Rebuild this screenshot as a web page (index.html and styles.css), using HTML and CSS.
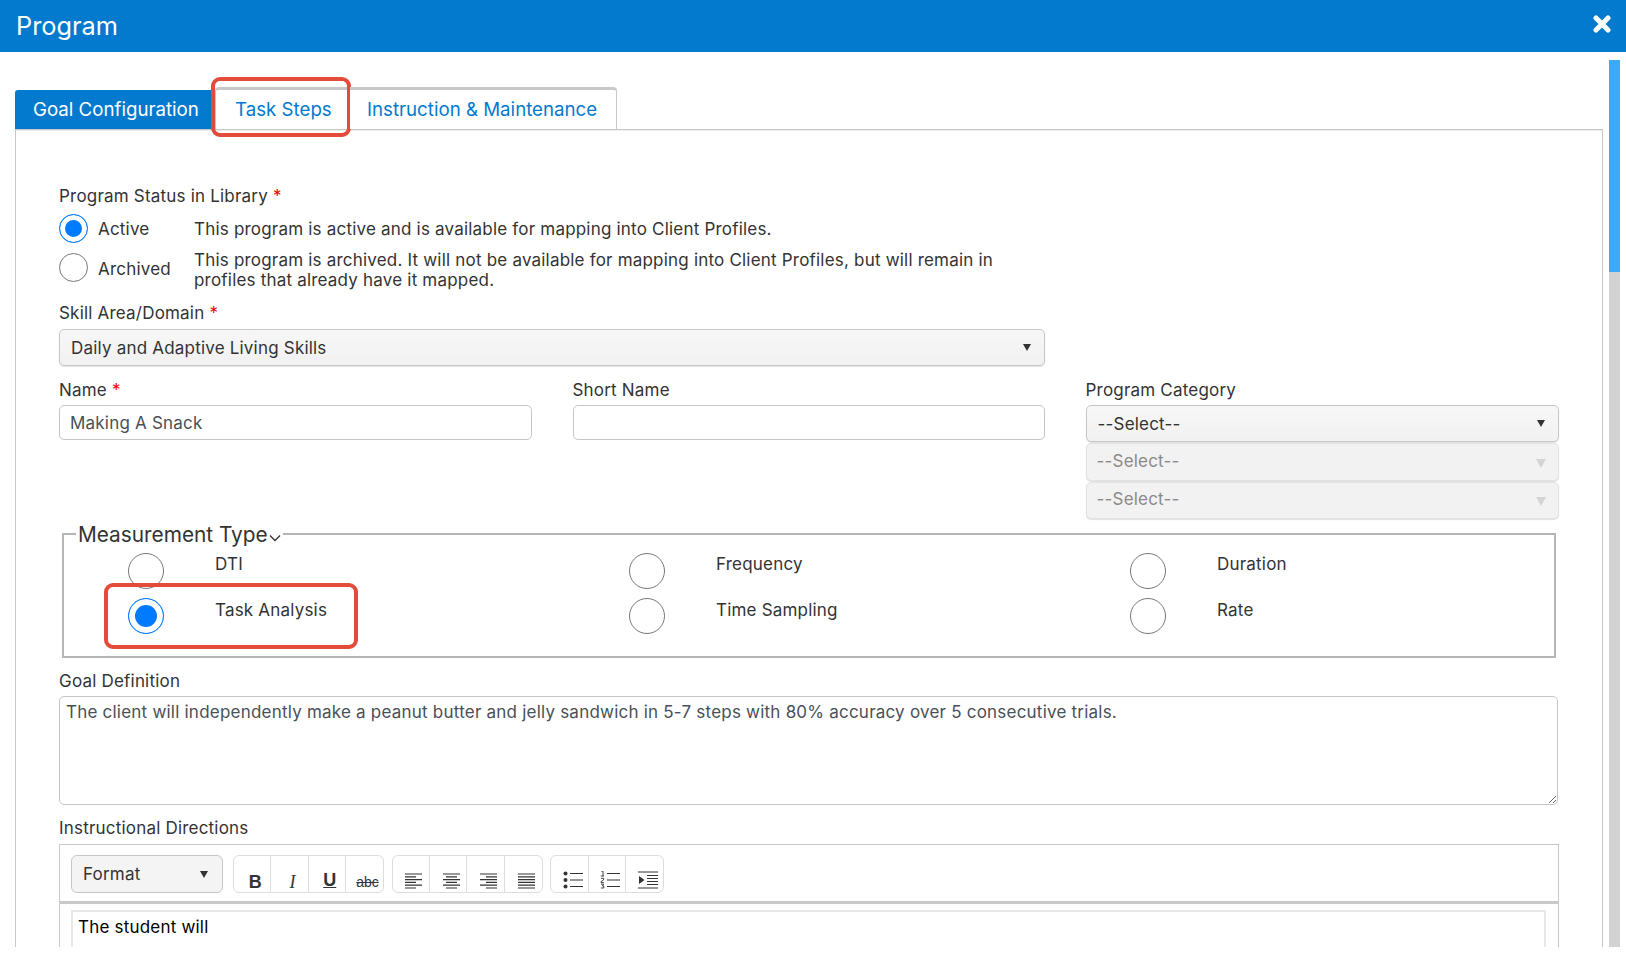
FILE: index.html
```html
<!DOCTYPE html>
<html lang="en">
<head>
<meta charset="utf-8">
<title>Program</title>
<link rel="stylesheet" href="styles.css">
</head>
<body>
<div class="modal">
  <header class="modal-header">
    <h1 class="modal-title">Program</h1>
    <svg class="close-icon" viewBox="0 0 18 18" width="18" height="18" aria-label="Close"><path d="M3 3 L15 15 M15 3 L3 15" fill="none" stroke="#fff" stroke-width="5" stroke-linecap="round"/></svg>
  </header>
  <div class="modal-body">
    <div class="scrollbar"><div class="scrollbar-thumb"></div></div>
    <nav class="tabs">
      <a class="tab tab-active">Goal Configuration</a>
      <a class="tab tab-steps">Task Steps<span class="callout callout-tab"></span></a>
      <a class="tab tab-inst">Instruction &amp; Maintenance</a>
    </nav>
    <section class="panel">
      <div class="field-label">Program Status in Library <span class="req">*</span></div>
      <div class="status-row">
        <input class="radio radio-sm" type="radio" name="status" checked>
        <span>Active</span>
        <span>This program is active and is available for mapping into Client Profiles.</span>
      </div>
      <div class="status-row status-row-two">
        <input class="radio radio-sm" type="radio" name="status">
        <span class="status-name">Archived</span>
        <span class="status-desc">This program is archived. It will not be available for mapping into Client Profiles, but will remain in profiles that already have it mapped.</span>
      </div>

      <div class="field-label skill-label">Skill Area/Domain <span class="req">*</span></div>
      <div class="select skill-select"><span>Daily and Adaptive Living Skills</span><i class="caret"></i></div>

      <div class="name-grid">
        <div>
          <div class="field-label">Name <span class="req">*</span></div>
          <input class="text-input" type="text" value="Making A Snack">
        </div>
        <div>
          <div class="field-label">Short Name</div>
          <input class="text-input" type="text">
        </div>
        <div>
          <div class="field-label">Program Category</div>
          <div class="select select-first"><span>--Select--</span><i class="caret"></i></div>
          <div class="select select-disabled"><span>--Select--</span><i class="caret"></i></div>
          <div class="select select-disabled"><span>--Select--</span><i class="caret"></i></div>
        </div>
      </div>

      <fieldset class="measure">
        <legend class="measure-legend">Measurement Type<svg class="chevron" viewBox="0 0 12 8" width="12" height="8"><path d="M1 1.5 L6 6.5 L11 1.5" fill="none" stroke="#333" stroke-width="1.3"/></svg></legend>
        <div class="measure-grid">
          <label class="measure-item"><input class="radio" type="radio" name="m"><span>DTI</span></label>
          <label class="measure-item"><input class="radio" type="radio" name="m"><span>Frequency</span></label>
          <label class="measure-item"><input class="radio" type="radio" name="m"><span>Duration</span></label>
          <label class="measure-item measure-low measure-task"><input class="radio" type="radio" name="m" checked><span>Task Analysis</span><span class="callout callout-task"></span></label>
          <label class="measure-item measure-low"><input class="radio" type="radio" name="m"><span>Time Sampling</span></label>
          <label class="measure-item measure-low"><input class="radio" type="radio" name="m"><span>Rate</span></label>
        </div>
      </fieldset>

      <div class="field-label goal-label">Goal Definition</div>
      <textarea class="goal-text">The client will independently make a peanut butter and jelly sandwich in 5-7 steps with 80% accuracy over 5 consecutive trials.</textarea>

      <div class="field-label dir-label">Instructional Directions</div>
      <div class="editor">
        <div class="toolbar">
          <div class="format"><span>Format</span><i class="caret"></i></div>
          <div class="tool-group">
            <span class="tool tool-b">B</span>
            <span class="tool tool-i">I</span>
            <span class="tool tool-u">U</span>
            <span class="tool tool-s">abc</span>
          </div>
          <div class="tool-group">
            <span class="tool"><svg class="ico" viewBox="0 0 17 16"><path d="M0 1H17M0 3.8H11M0 6.6H17M0 9.4H11M0 12.2H17M0 15H11"/></svg></span>
            <span class="tool"><svg class="ico" viewBox="0 0 17 16"><path d="M0 1H17M3 3.8H14M0 6.6H17M3 9.4H14M0 12.2H17M3 15H14"/></svg></span>
            <span class="tool"><svg class="ico" viewBox="0 0 17 16"><path d="M0 1H17M6 3.8H17M0 6.6H17M6 9.4H17M0 12.2H17M6 15H17"/></svg></span>
            <span class="tool"><svg class="ico" viewBox="0 0 17 16"><path d="M0 1H17M0 3.8H17M0 6.6H17M0 9.4H17M0 12.2H17M0 15H17"/></svg></span>
          </div>
          <div class="tool-group">
            <span class="tool"><svg class="ico ico-wide" viewBox="0 0 20 18"><path d="M7 2.5H20M7 9H20M7 15.5H20"/><circle class="ico-fill" cx="2.5" cy="2.5" r="2"/><circle class="ico-fill" cx="2.5" cy="9" r="2"/><circle class="ico-fill" cx="2.5" cy="15.5" r="2"/></svg></span>
            <span class="tool"><svg class="ico ico-wide" viewBox="0 0 20 18"><path d="M7 2.5H20M7 9H20M7 15.5H20"/><path class="ico-thin" d="M1.5 .5L3 0V5M.8 5H4M1 7.3H3.6V9L1 10.6V11.6H4M1 13.2H3.6L2.4 15H3.8V17H.9"/></svg></span>
            <span class="tool"><svg class="ico ico-wide" viewBox="0 0 20 18"><path d="M0 1H20M9 4.5H20M9 7.5H20M9 10.5H20M9 13.5H20M0 17H20"/><path class="ico-fill" d="M1 5L6.5 9L1 13Z"/></svg></span>
          </div>
        </div>
        <div class="editor-body">The student will</div>
      </div>
    </section>
  </div>
</div>
</body>
</html>
```
FILE: styles.css
```css
* { box-sizing: border-box; }
html, body { margin: 0; height: 100%; background: #fff; overflow: hidden; }
body { font-family: Inter, Roboto, "Liberation Sans", sans-serif; font-size: 17px; line-height: 20px; color: #333; letter-spacing: .2px; }

.modal { width: 1626px; height: 957px; }
.modal-header { height: 52px; background: #047ace; display: flex; align-items: center; justify-content: space-between; padding: 0 15px 0 16px; }
.modal-title { margin: 0; font-size: 25.3px; font-weight: 400; color: #fff; letter-spacing: 0; }
.close-icon { display: block; margin-bottom: 4px; }

.modal-body { position: relative; height: 895px; overflow: hidden; padding: 35px 23px 0 15px; }
.scrollbar { position: absolute; top: 8px; right: 6px; bottom: 0; width: 11px; background: #d2d2d2; }
.scrollbar-thumb { height: 212px; background: #3fa9f5; }

.tabs { display: flex; align-items: flex-end; height: 42px; position: relative; }
.tab { position: relative; display: flex; align-items: center; height: 42px; color: #047ace; font-size: 18.7px; letter-spacing: 0; background: #fff; border: 1px solid #c8c8c8; border-top: 3px solid #c8c8c8; border-bottom: 0; border-left: 0; }
.tab-active { height: 39px; width: 199px; padding: 0 0 0 18px; background: #047ace; color: #fff; border: 0; border-radius: 3px 3px 0 0; margin-right: 1px; }
.tab-steps { width: 135px; padding-left: 19px; border-left: 1px solid #c8c8c8; border-radius: 4px 0 0 0; border-right: 0; }
.tab-inst { width: 267px; padding-left: 17px; border-radius: 0 4px 0 0; }

.callout { position: absolute; border: 4px solid #e34c3a; border-radius: 9px; pointer-events: none; }
.callout-tab { left: -5px; right: -1px; top: -13px; bottom: -8px; }
.callout-task { left: -24px; top: -15px; width: 254px; height: 66px; }

.panel { border: 1px solid #c8c8c8; border-bottom: 0; height: 900px; padding: 56px 44px 0 43px; box-shadow: inset 0 1px 0 #eee; }
.field-label { height: 20px; white-space: nowrap; }
.req { color: #e00; }

.status-row { display: grid; grid-template-columns: 39px 96px 810px; align-items: center; height: 29px; margin-top: 8px; }
.status-row-two { height: 40px; margin-top: 7px; align-items: start; }
.status-row-two .radio { margin-top: 3px; }
.status-name { line-height: 38px; }

.radio { appearance: none; -webkit-appearance: none; display: block; margin: 0; width: 36px; height: 36px; border: 1px solid #777; border-radius: 50%; background: #fff; }
.radio:checked { border-color: #0a7cff; background: #007bff; box-shadow: inset 0 0 0 6px #fff; }
.radio-sm { width: 29px; height: 29px; }
.radio-sm:checked { box-shadow: inset 0 0 0 5px #fff; }

.skill-label { margin-top: 13px; line-height: 21px; }
.select { display: flex; align-items: center; justify-content: space-between; height: 37px; padding: 0 13px 0 11px; background: linear-gradient(#f7f7f7, #f1f1f1); border: 1px solid #c6c6c6; border-radius: 5px; box-shadow: 0 1px 1px rgba(0,0,0,.12); color: #333; }
.skill-select { width: 986px; margin-top: 6px; }
.caret { width: 0; height: 0; border-left: 4.5px solid transparent; border-right: 4.5px solid transparent; border-top: 7px solid #333; }
.select-first { margin-top: 5px; }
.select-disabled { height: 38px; margin-top: 1px; padding: 0 13px 3px 10px; color: #8a8a8a; border-color: #e2e2e2; background: #f2f2f2; }
.select-disabled .caret { border-left-width: 5.5px; border-right-width: 5.5px; border-top: 9px solid #d4d4d4; margin: 5px -1px 0 0; }
.select-disabled + .select-disabled { height: 37px; }

.name-grid { display: grid; grid-template-columns: 473px 472.5px 473px; column-gap: 40.5px; margin-top: 14px; }
.text-input { display: block; width: 100%; height: 35px; margin-top: 5px; padding: 0 10px; border: 1px solid #c6c6c6; border-radius: 5px; font: inherit; letter-spacing: inherit; color: #495057; }

.measure { margin: 1px 2px 0 3px; padding: 5px 0 22px 64px; border: 2px solid #b5b5b5; min-width: 0; }
.measure-legend { height: 28px; line-height: 30px; padding: 0 2px; margin-left: -52px; font-size: 20.8px; letter-spacing: 0; }
.chevron { margin-left: 1px; }
.measure-grid { display: grid; grid-template-columns: repeat(3, 501px); grid-auto-rows: 36px; row-gap: 9px; }
.measure-item { display: flex; gap: 51px; position: relative; }
.measure-item span { padding-top: 1px; }
.measure-low span { padding-top: 2px; }
.measure-task { z-index: 1; }

.goal-label { margin-top: 13px; line-height: 21px; }
.goal-text { display: block; width: 100%; height: 109px; margin-top: 5px; padding: 5px 6px; border: 1px solid #c6c6c6; border-radius: 5px; font: inherit; letter-spacing: .22px; color: #495057; }
.dir-label { margin-top: 13px; line-height: 21px; }

.editor { width: 1500px; margin-top: 6px; border: 1px solid #c8c8c8; border-bottom: 0; }
.toolbar { display: flex; height: 59px; padding: 10px 0 0 11px; border-bottom: 3px solid #c8c8c8; }
.format { display: flex; align-items: center; justify-content: space-between; width: 152px; height: 38px; padding: 0 14px 0 11px; background: #f4f4f4; border: 1px solid #c6c6c6; border-radius: 6px; }
.tool-group { display: flex; height: 38px; border: 1px solid #ddd; border-radius: 6px; margin-left: 7.5px; }
.format + .tool-group { margin-left: 10px; }
.tool { display: flex; align-items: flex-end; justify-content: center; width: 37.3px; padding: 0 0 3px 6px; border-right: 1px solid #ddd; color: #333; letter-spacing: 0; }
.tool:last-child { border-right: 0; }
.tool-b { font: 700 18px/20px "Liberation Sans", sans-serif; padding-bottom: 0; }
.tool-i { font: italic 18px/20px "Liberation Serif", serif; padding-bottom: 0; }
.tool-u { font: 700 18px/20px "Liberation Sans", sans-serif; text-decoration: underline; padding-bottom: 2px; }
.tool-s { font: 14px/20px "Liberation Sans", sans-serif; text-decoration: line-through; padding-bottom: 0; }
.ico { display: block; width: 17px; height: 16px; fill: none; stroke: #333; stroke-width: 1.2; flex: none; }
.ico-wide { width: 20px; height: 18px; }
.ico-thin { stroke-width: .9; }
.ico-fill { fill: #333; stroke: none; }
.editor-body { margin: 6px 12px 0 11px; height: 60px; padding: 5px 5px; border: 2px solid #e8e8e8; border-bottom: 0; color: #000; }
```
